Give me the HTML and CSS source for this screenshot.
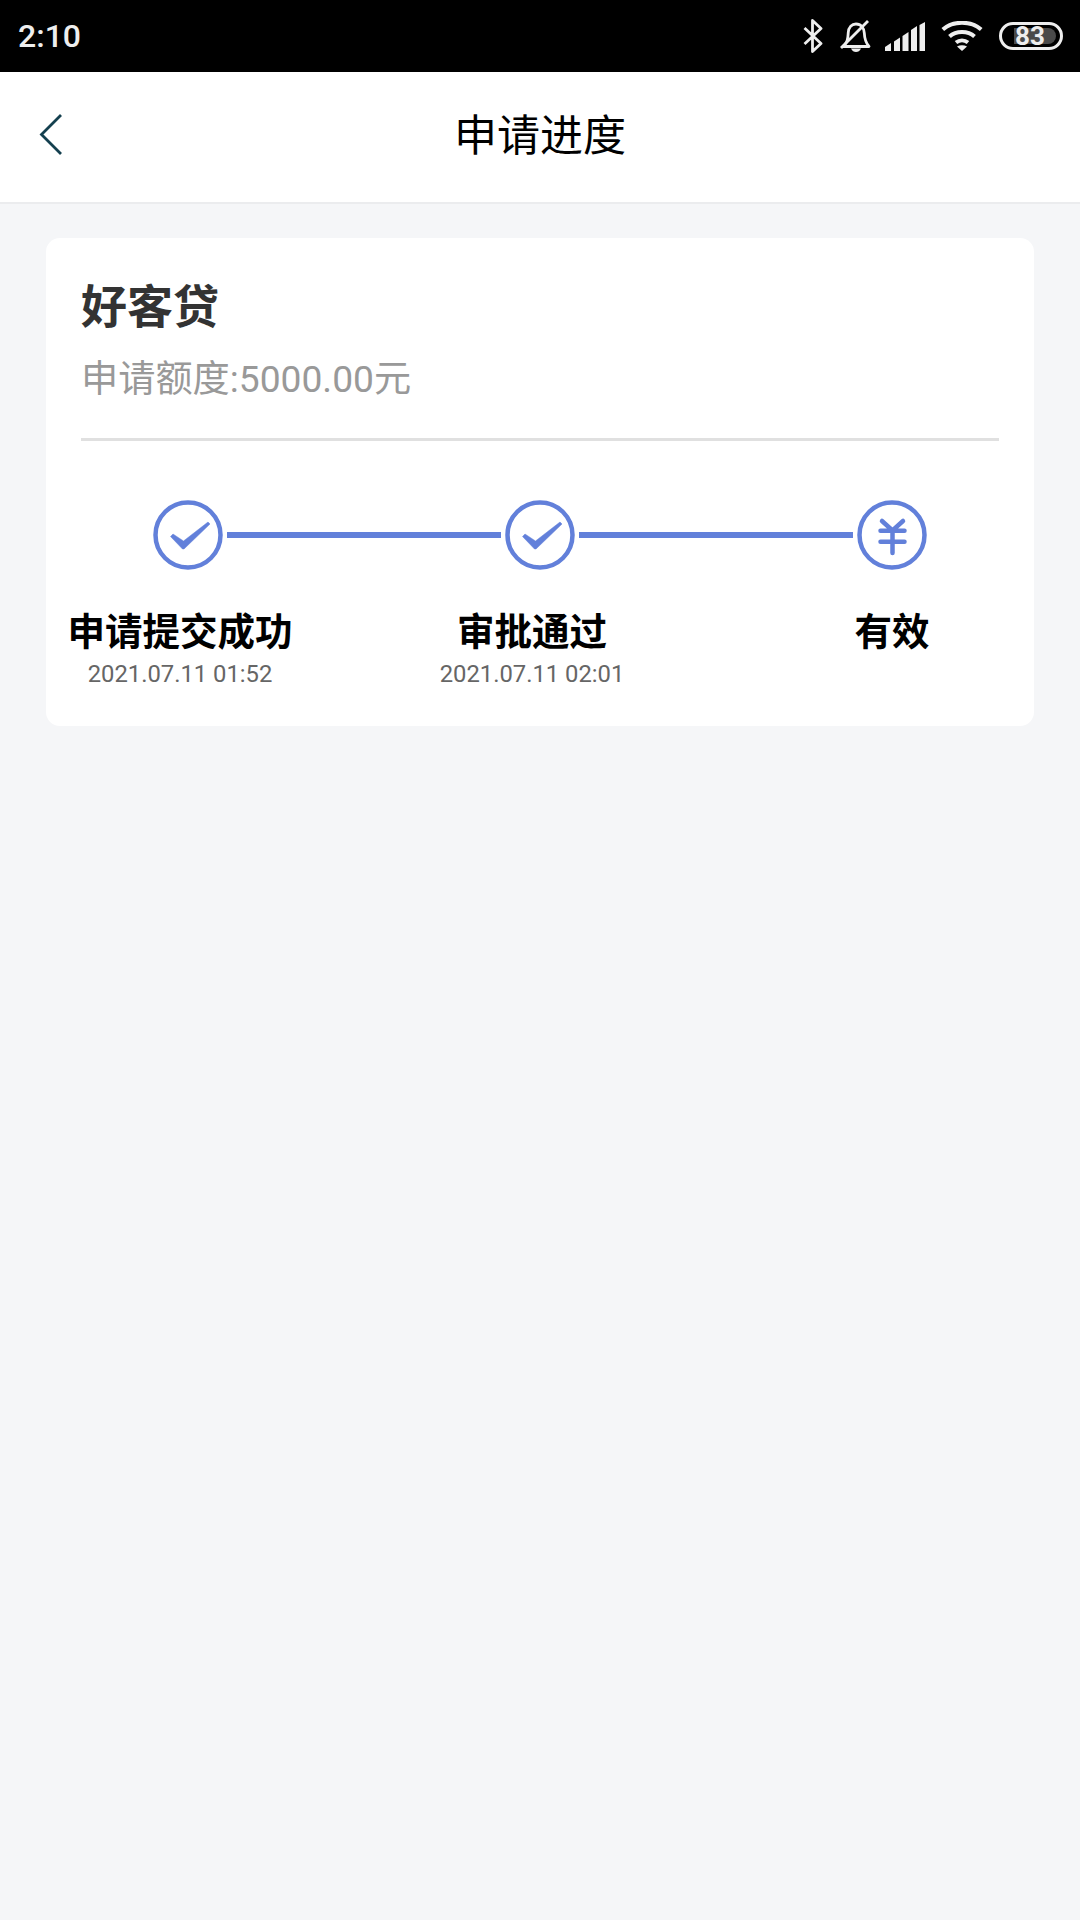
FILE: index.html
```html
<!DOCTYPE html>
<html lang="zh">
<head>
<meta charset="utf-8">
<title>申请进度</title>
<link rel="stylesheet" href="styles.css">
</head>
<body>
<div class="phone">
  <div class="statusbar">
    <span class="time">2:10</span>
    <div class="status-icons">
      <svg class="ic-bt" width="20" height="34" viewBox="0 0 20 34"><path d="M1.500 9 L18 24.500 L9.500 32.500 V1.500 L18 9.500 L1.500 25" fill="none" stroke="#eee" stroke-width="2.800" stroke-linejoin="round"/></svg>
      <svg class="ic-bell" width="32" height="33" viewBox="0 0 32 33"><path d="M5 24.500 C8 21 8 17 8.200 13 C8.500 7 12 4 16 4 C21 4 24 8 24.300 13 C24.500 18 25 22 29 26.500 H2" fill="none" stroke="#eee" stroke-width="2.800" stroke-linejoin="round"/><path d="M11 28.500 H21 C20 31 18 32 16 32 C14 32 12 31 11 28.500 Z" fill="#eee"/><path d="M1 28 L28 1" stroke="#eee" stroke-width="2.800"/></svg>
      <svg class="ic-signal" width="40" height="29" viewBox="0 0 40 29"><path d="M0 29 V25 L6 21 V29 Z M9 29 V19.500 L15 15.500 V29 Z M17.500 29 V14 L23.500 10 V29 Z M26 29 V8 L32 4 V29 Z M34.500 29 V3 L40 0 V29 Z" fill="#eee"/></svg>
      <svg class="ic-wifi" width="42" height="30" viewBox="0 0 42 30"><path d="M1.800 8.500 C12 -0.500 30 -0.500 40.200 8.500" fill="none" stroke="#eee" stroke-width="4"/><path d="M8.500 15.500 C15 9.500 27 9.500 33.500 15.500" fill="none" stroke="#eee" stroke-width="4"/><path d="M15 21.500 C18.500 18.700 23.500 18.700 27 21.500" fill="none" stroke="#eee" stroke-width="4"/><path d="M21 30 L16 25.500 C19 23.700 23 23.700 26 25.500 Z" fill="#eee"/></svg>
      <div class="battery"><div class="battery-fill"><span class="battery-num">83</span></div></div>
    </div>
  </div>
  <header class="navbar">
    <svg class="back" width="24" height="42" viewBox="0 0 24 42"><path d="M22 1 L2.500 20.500 L22 40" fill="none" stroke="#14404f" stroke-width="2.800"/></svg>
    <h1 class="nav-title">申请进度</h1>
  </header>
  <main class="content">
    <section class="card">
      <div class="card-head">
        <h2 class="product">好客贷</h2>
        <p class="amount">申请额度:5000.00元</p>
      </div>
      <div class="divider"></div>
      <div class="track">
        <svg class="node" width="70" height="70" viewBox="0 0 70 70"><circle cx="35" cy="35" r="32.500" fill="none" stroke="#6280da" stroke-width="4.500"/><path d="M17.500 36.500 L20 34 L30.500 41 L55 22 L57 24 L31 49 L29.500 49 Z" fill="#6280da" stroke="#6280da" stroke-width="0.500" stroke-linejoin="round"/></svg>
        <div class="line"></div>
        <svg class="node" width="70" height="70" viewBox="0 0 70 70"><circle cx="35" cy="35" r="32.500" fill="none" stroke="#6280da" stroke-width="4.500"/><path d="M17.500 36.500 L20 34 L30.500 41 L55 22 L57 24 L31 49 L29.500 49 Z" fill="#6280da" stroke="#6280da" stroke-width="0.500" stroke-linejoin="round"/></svg>
        <div class="line"></div>
        <svg class="node" width="70" height="70" viewBox="0 0 70 70"><circle cx="35" cy="35" r="32.500" fill="none" stroke="#6280da" stroke-width="4.500"/><path d="M25 21 L35.500 30.500 L46 21 M23.500 30.700 H47.500 M23.500 41.700 H47.500 M35.500 30.500 V53" fill="none" stroke="#6280da" stroke-width="4.500" stroke-linecap="round"/></svg>
      </div>
      <div class="steps">
        <div class="step"><div class="step-name">申请提交成功</div><div class="step-date">2021.07.11 01:52</div></div>
        <div class="step"><div class="step-name">审批通过</div><div class="step-date">2021.07.11 02:01</div></div>
        <div class="step"><div class="step-name">有效</div></div>
      </div>
    </section>
  </main>
</div>
</body>
</html>
```
FILE: styles.css
```css
* { box-sizing: border-box; }
html, body { margin: 0; padding: 0; }
body { font-family: Roboto, "Noto Sans CJK SC", sans-serif; background: #f5f6f8; }
.phone { width: 1080px; height: 1920px; display: flex; flex-direction: column; overflow: hidden; }

.statusbar { height: 72px; background: #000; display: flex; align-items: center; justify-content: space-between; padding: 0 17px 0 18px; flex: none; }
.time { color: #eee; font-size: 32px; font-weight: 500; line-height: 72px; }
.status-icons { display: flex; align-items: center; }
.ic-bt { margin-right: 17px; }
.ic-bell { margin-right: 13px; }
.ic-signal { margin-right: 16px; }
.ic-wifi { margin-right: 16px; }
.battery { width: 64px; height: 28px; border: 3px solid #eee; border-radius: 14px; padding: 3px 4px 3px 12px; }
.battery-fill { width: 100%; height: 100%; background: #4a4a4a; border-radius: 0 8px 8px 0; display: flex; align-items: center; }
.battery-num { color: #eee; font-size: 26px; font-weight: 700; line-height: 16px; margin-left: 1px; }

.navbar { height: 132px; background: #fff; border-bottom: 2px solid #ebecee; display: flex; align-items: center; justify-content: center; position: relative; flex: none; }
.back { position: absolute; left: 39px; top: 42px; }
.nav-title { margin: 0 0 2px 0; font-size: 43px; font-weight: 400; color: #000; line-height: 60px; }

.content { padding: 34px 46px 0; }
.card { background: #fff; border-radius: 14px; height: 488px; }
.card-head { padding: 39px 0 0 35px; }
.product { margin: 0; font-size: 46px; font-weight: 700; color: #333; line-height: 60px; }
.amount { margin: 17px 0 0; font-size: 37.200px; color: #999; line-height: 50px; }
.divider { height: 3px; background: #e0e0e0; margin: 34px 35px 0 35px; }
.track { display: flex; align-items: center; gap: 4px; margin-top: 59px; padding-left: 107px; }
.node { flex: none; display: block; }
.line { width: 274px; height: 6px; background: #6280da; }
.steps { display: grid; grid-template-columns: 268px 436px 284px; margin-top: 37px; text-align: center; }
.step-name { font-size: 37.500px; font-weight: 700; color: #000; line-height: 50px; }
.step-date { font-size: 23.800px; color: #666; line-height: 30px; margin-top: 2px; }
```
